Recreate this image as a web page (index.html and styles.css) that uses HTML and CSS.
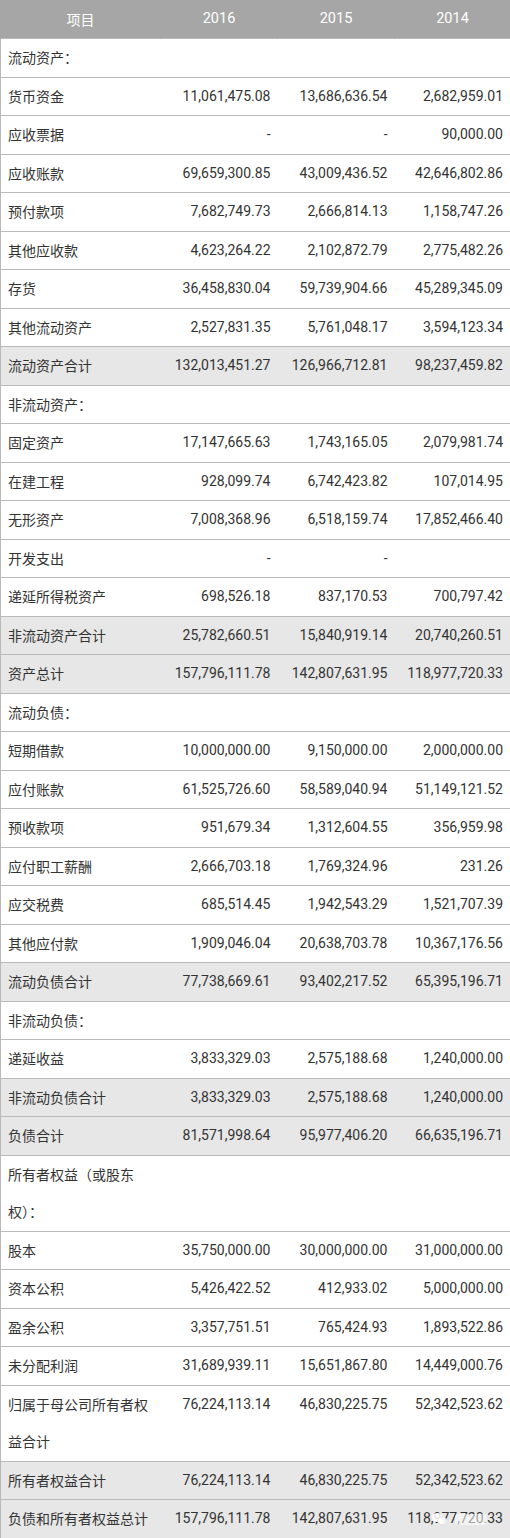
FILE: index.html
```html
<!DOCTYPE html>
<html lang="zh-CN">
<head>
<meta charset="utf-8">
<title>资产负债表</title>
<link rel="stylesheet" href="styles.css">
</head>
<body>
<table class="sheet">
  <colgroup>
    <col class="c-name"><col class="c-num"><col class="c-num"><col class="c-last">
  </colgroup>
  <thead>
    <tr><th>项目</th><th>2016</th><th>2015</th><th>2014</th></tr>
  </thead>
  <tbody>
    <tr><td>流动资产：</td><td></td><td></td><td></td></tr>
    <tr><td>货币资金</td><td>11,061,475.08</td><td>13,686,636.54</td><td>2,682,959.01</td></tr>
    <tr><td>应收票据</td><td>-</td><td>-</td><td>90,000.00</td></tr>
    <tr><td>应收账款</td><td>69,659,300.85</td><td>43,009,436.52</td><td>42,646,802.86</td></tr>
    <tr><td>预付款项</td><td>7,682,749.73</td><td>2,666,814.13</td><td>1,158,747.26</td></tr>
    <tr><td>其他应收款</td><td>4,623,264.22</td><td>2,102,872.79</td><td>2,775,482.26</td></tr>
    <tr><td>存货</td><td>36,458,830.04</td><td>59,739,904.66</td><td>45,289,345.09</td></tr>
    <tr><td>其他流动资产</td><td>2,527,831.35</td><td>5,761,048.17</td><td>3,594,123.34</td></tr>
    <tr class="sum"><td>流动资产合计</td><td>132,013,451.27</td><td>126,966,712.81</td><td>98,237,459.82</td></tr>
    <tr><td>非流动资产：</td><td></td><td></td><td></td></tr>
    <tr><td>固定资产</td><td>17,147,665.63</td><td>1,743,165.05</td><td>2,079,981.74</td></tr>
    <tr><td>在建工程</td><td>928,099.74</td><td>6,742,423.82</td><td>107,014.95</td></tr>
    <tr><td>无形资产</td><td>7,008,368.96</td><td>6,518,159.74</td><td>17,852,466.40</td></tr>
    <tr><td>开发支出</td><td>-</td><td>-</td><td></td></tr>
    <tr><td>递延所得税资产</td><td>698,526.18</td><td>837,170.53</td><td>700,797.42</td></tr>
    <tr class="sum"><td>非流动资产合计</td><td>25,782,660.51</td><td>15,840,919.14</td><td>20,740,260.51</td></tr>
    <tr class="sum"><td>资产总计</td><td>157,796,111.78</td><td>142,807,631.95</td><td>118,977,720.33</td></tr>
    <tr><td>流动负债：</td><td></td><td></td><td></td></tr>
    <tr><td>短期借款</td><td>10,000,000.00</td><td>9,150,000.00</td><td>2,000,000.00</td></tr>
    <tr><td>应付账款</td><td>61,525,726.60</td><td>58,589,040.94</td><td>51,149,121.52</td></tr>
    <tr><td>预收款项</td><td>951,679.34</td><td>1,312,604.55</td><td>356,959.98</td></tr>
    <tr><td>应付职工薪酬</td><td>2,666,703.18</td><td>1,769,324.96</td><td>231.26</td></tr>
    <tr><td>应交税费</td><td>685,514.45</td><td>1,942,543.29</td><td>1,521,707.39</td></tr>
    <tr><td>其他应付款</td><td>1,909,046.04</td><td>20,638,703.78</td><td>10,367,176.56</td></tr>
    <tr class="sum"><td>流动负债合计</td><td>77,738,669.61</td><td>93,402,217.52</td><td>65,395,196.71</td></tr>
    <tr><td>非流动负债：</td><td></td><td></td><td></td></tr>
    <tr><td>递延收益</td><td>3,833,329.03</td><td>2,575,188.68</td><td>1,240,000.00</td></tr>
    <tr class="sum"><td>非流动负债合计</td><td>3,833,329.03</td><td>2,575,188.68</td><td>1,240,000.00</td></tr>
    <tr class="sum"><td>负债合计</td><td>81,571,998.64</td><td>95,977,406.20</td><td>66,635,196.71</td></tr>
    <tr><td>所有者权益（或股东权）：</td><td></td><td></td><td></td></tr>
    <tr><td>股本</td><td>35,750,000.00</td><td>30,000,000.00</td><td>31,000,000.00</td></tr>
    <tr><td>资本公积</td><td>5,426,422.52</td><td>412,933.02</td><td>5,000,000.00</td></tr>
    <tr><td>盈余公积</td><td>3,357,751.51</td><td>765,424.93</td><td>1,893,522.86</td></tr>
    <tr><td>未分配利润</td><td>31,689,939.11</td><td>15,651,867.80</td><td>14,449,000.76</td></tr>
    <tr><td>归属于母公司所有者权益合计</td><td>76,224,113.14</td><td>46,830,225.75</td><td>52,342,523.62</td></tr>
    <tr class="sum"><td>所有者权益合计</td><td>76,224,113.14</td><td>46,830,225.75</td><td>52,342,523.62</td></tr>
    <tr class="sum"><td>负债和所有者权益总计</td><td>157,796,111.78</td><td>142,807,631.95</td><td class="marked">118,977,720.33<svg class="wm" viewBox="0 0 60 16" width="60" height="16" aria-hidden="true"><ellipse cx="6.5" cy="6.5" rx="5.6" ry="4.6" fill="#fff" fill-opacity="0.85"/><ellipse cx="11.2" cy="9.8" rx="4.6" ry="3.8" fill="#fff" fill-opacity="0.9" stroke="#d8d8d8" stroke-width="0.6"/><rect x="24" y="3" width="32" height="11" rx="3" fill="#fff" fill-opacity="0.55"/></svg></td></tr>
  </tbody>
</table>
</body>
</html>
```

FILE: styles.css
```css
html, body {
  margin: 0;
  padding: 0;
  background: #ffffff;
}

.sheet {
  width: 510px;
  border-collapse: collapse;
  table-layout: fixed;
  font-family: "Noto Sans CJK SC", "Noto Sans", sans-serif;
  font-size: 14px;
  color: #333333;
}

.c-name { width: 160px; }
.c-num { width: 117px; }
.c-last { width: 116px; }

.sheet th {
  background: #a6a6a6;
  color: #ffffff;
  font-weight: normal;
  font-family: Roboto, "Noto Sans CJK SC", sans-serif;
  font-size: 14.5px;
  height: 38px;
  line-height: 38px;
  padding: 0;
  text-align: center;
  border-left: 1px solid #a6a6a6;
  border-right: 1px solid #a6a6a6;
}

.sheet th:first-child {
  font-family: "Noto Sans CJK SC", sans-serif;
  font-size: 14px;
}

.sheet td {
  line-height: 37.5px;
  padding: 0 7px;
  vertical-align: top;
  border-top: 1px solid #b9b9b9;
  border-bottom: 1px solid #b9b9b9;
  font-family: Roboto, "Noto Sans CJK SC", sans-serif;
  text-align: right;
  white-space: nowrap;
}

.sheet td:first-child {
  font-family: "Noto Sans CJK SC", sans-serif;
  text-align: left;
  white-space: normal;
  border-left: 1px solid #b9b9b9;
}

.sheet td:last-child {
  border-right: 1px solid #c4c4c4;
}

.sheet tr.sum td {
  background: #e7e7e7;
}

.marked {
  position: relative;
}

.wm {
  position: absolute;
  left: 36px;
  top: 11px;
  display: block;
  pointer-events: none;
}
```
